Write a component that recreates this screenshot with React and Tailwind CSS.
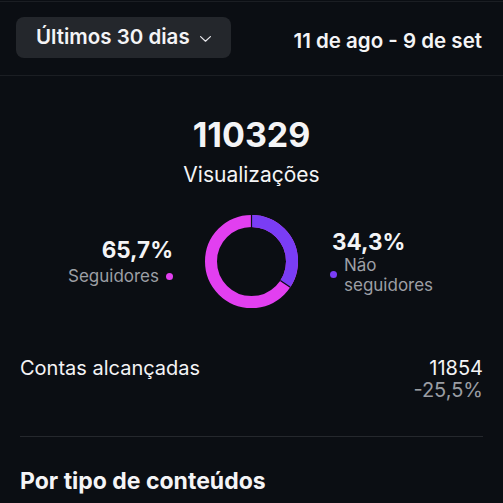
const PINK = '#e23ff0'
const PURPLE = '#7a3df5'

function Donut() {
  const size = 93
  const stroke = 12
  const r = (size - stroke) / 2
  const c = 2 * Math.PI * r
  const purple = c * 0.343
  const cx = size / 2
  const sepAngle = (0.343 * 360 - 90) * (Math.PI / 180)
  const inner = r - stroke / 2
  const outer = r + stroke / 2
  return (
    <svg width={size} height={size} viewBox={`0 0 ${size} ${size}`}>
      <g transform={`rotate(-90 ${cx} ${cx})`}>
        <circle cx={cx} cy={cx} r={r} fill="none" stroke={PINK} strokeWidth={stroke} />
        <circle
          cx={cx}
          cy={cx}
          r={r}
          fill="none"
          stroke={PURPLE}
          strokeWidth={stroke}
          strokeDasharray={`${purple} ${c}`}
        />
      </g>
      <line x1={cx} y1={cx - inner} x2={cx} y2={cx - outer} stroke="#0b0e13" strokeWidth="1.2" />
      <line
        x1={cx + inner * Math.cos(sepAngle)}
        y1={cx + inner * Math.sin(sepAngle)}
        x2={cx + outer * Math.cos(sepAngle)}
        y2={cx + outer * Math.sin(sepAngle)}
        stroke="#0b0e13"
        strokeWidth="1.2"
      />
    </svg>
  )
}

export default function App() {
  return (
    <div
      className="w-[503px] h-[503px] overflow-hidden bg-[#0b0e13] text-[#f4f4f6] pt-px"
      style={{ fontFamily: 'Inter, "Noto Sans", sans-serif' }}
    >
      <div className="border-t border-b border-[#1b1e23] flex items-center justify-between pl-4 pr-[21px] pt-[15px] pb-[17px]">
        <button className="h-[41px] rounded-lg bg-[#24272c] px-5 flex items-center gap-2.5 text-[20.5px] font-semibold">
          Últimos 30 dias
          <svg width="11" height="6" viewBox="0 0 11 6" className="mt-0.5">
            <path d="M0.6 0.6 L5.5 5.2 L10.4 0.6" fill="none" stroke="#e6e6ea" strokeWidth="1.2" strokeLinecap="round" strokeLinejoin="round" />
          </svg>
        </button>
        <span className="text-[20.5px] font-semibold mt-2">11 de ago - 9 de set</span>
      </div>

      <div className="flex flex-col items-center pt-[39px]">
        <p className="text-[34px] font-bold leading-[40px]">110329</p>
        <p className="text-[21px] leading-[28px] mt-[6px]">Visualizações</p>
      </div>

      <div className="grid grid-cols-[1fr_auto_1fr] gap-8 items-center mt-[26px]">
        <div className="justify-self-end flex flex-col items-end">
          <p className="text-[22.5px] font-bold leading-[26px]">65,7%</p>
          <div className="flex items-center gap-[7px] mt-[3px]">
            <span className="text-[17px] leading-[20px] text-[#9d9fa5]">Seguidores</span>
            <span className="w-[7px] h-[7px] rounded-full bg-[#e23ff0]" />
          </div>
        </div>
        <Donut />
        <div className="justify-self-start flex flex-col items-start">
          <p className="text-[22.5px] font-bold leading-[26px] pl-0.5">34,3%</p>
          <div className="flex items-center gap-[7px]">
            <span className="w-[7px] h-[7px] rounded-full bg-[#7a3df5]" />
            <span className="text-[17px] leading-[20px] text-[#9d9fa5]">
              Não
              <br />
              seguidores
            </span>
          </div>
        </div>
      </div>

      <div className="flex justify-between px-5 mt-[49px] text-[20px] leading-[22px]">
        <span>Contas alcançadas</span>
        <div className="flex flex-col items-end">
          <span>11854</span>
          <span className="text-[#9a9da3]">-25,5%</span>
        </div>
      </div>

      <div className="mx-5 mt-[35px] h-px bg-[#25282d]" />

      <p className="px-5 mt-[30px] text-[23px] font-bold leading-[28px]">Por tipo de conteúdos</p>
    </div>
  )
}
